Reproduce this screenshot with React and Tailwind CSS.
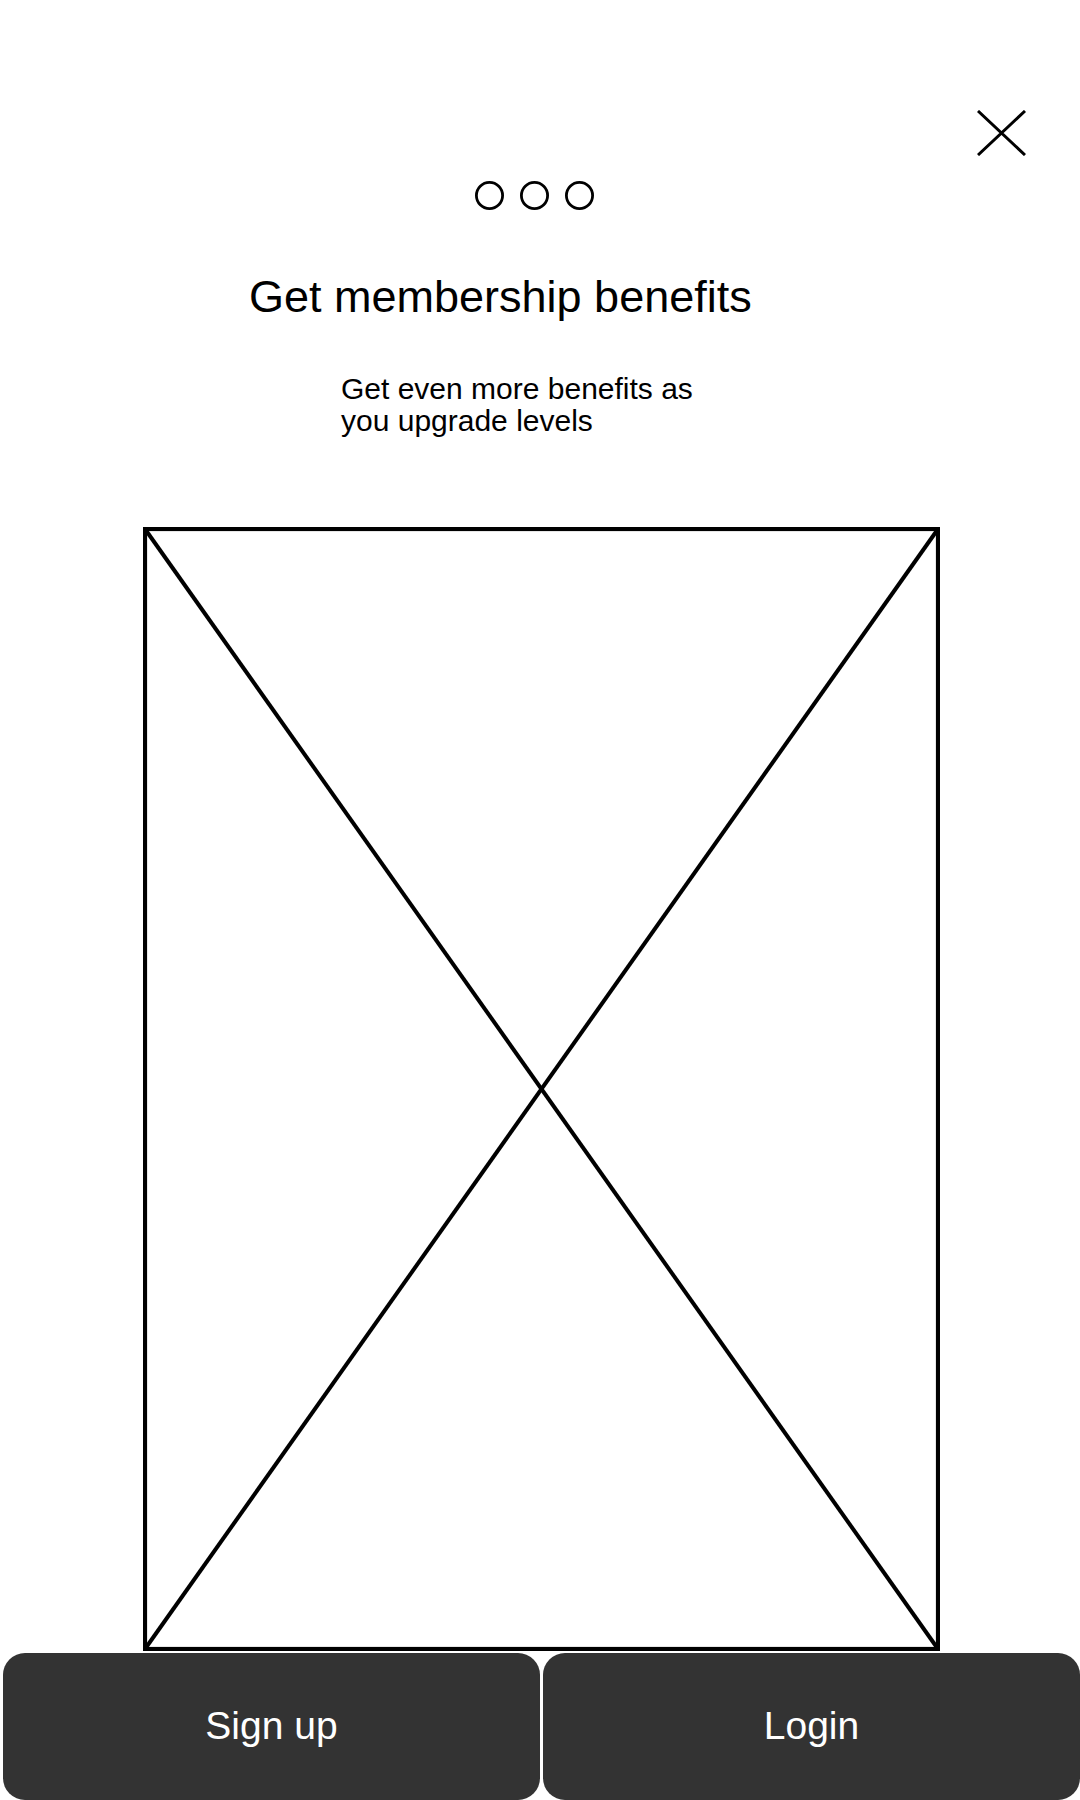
// Onboarding slide: membership benefits wireframe
function PagerDots() {
  return (
    <div className="ml-[475px] mt-[25px] flex gap-[16px]">
      {[0, 1, 2].map((i) => (
        <svg key={i} width="29" height="29" viewBox="0 0 29 29">
          <circle cx="14.5" cy="14.5" r="13.1" fill="none" stroke="#000" strokeWidth="2.8" />
        </svg>
      ))}
    </div>
  )
}

function Placeholder() {
  return (
    <svg className="ml-[143px] mt-[90px] block" width="797" height="1124" viewBox="0 0 797 1124">
      <rect x="2" y="2" width="793" height="1120" fill="none" stroke="#000" strokeWidth="4.2" />
      <line x1="2" y1="2" x2="795" y2="1122" stroke="#000" strokeWidth="4" />
      <line x1="795" y1="2" x2="2" y2="1122" stroke="#000" strokeWidth="4" />
    </svg>
  )
}

export default function App() {
  return (
    <div className="flex h-[1800px] w-[1080px] flex-col overflow-hidden bg-white font-['Liberation_Sans',Arial,sans-serif] text-black">
      <div className="flex justify-end pr-[54px] pt-[110px]">
        <button aria-label="Close">
          <svg width="49" height="46" viewBox="0 0 49 46" className="block">
            <path d="M1 1L48 45M48 1L1 45" stroke="#000" strokeWidth="3" fill="none" />
          </svg>
        </button>
      </div>

      <PagerDots />

      <h1 className="ml-[249px] mt-[61px] text-[45px] font-normal leading-[52px]">Get membership benefits</h1>
      <p className="ml-[341px] mt-[50px] w-[370px] text-[30px] leading-[32px]">
        Get even more benefits as you upgrade levels
      </p>

      <Placeholder />

      <div className="mt-[2px] flex gap-[3px] pl-[3px]">
        <button className="flex h-[147px] flex-1 items-center justify-center rounded-[22px] bg-[#333333] text-[39px] text-white">
          Sign up
        </button>
        <button className="flex h-[147px] flex-1 items-center justify-center rounded-[22px] bg-[#333333] text-[39px] text-white">
          Login
        </button>
      </div>
    </div>
  )
}
